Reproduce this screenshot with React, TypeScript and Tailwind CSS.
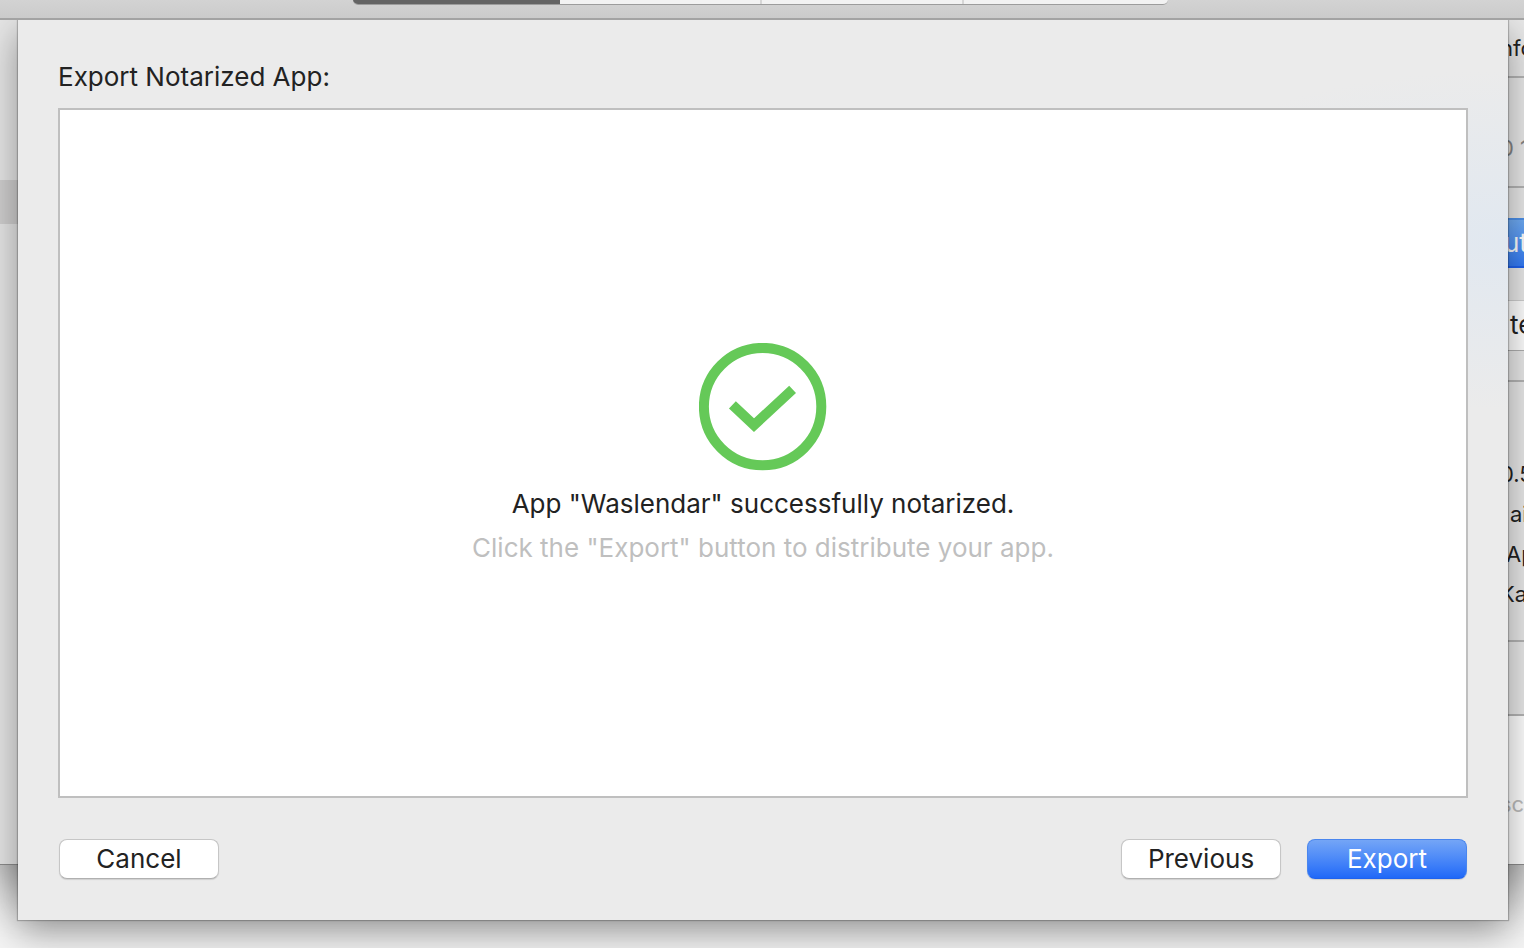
import type { ReactNode } from "react";

function Toolbar() {
  return (
    <header className="relative z-20 flex h-5 items-start justify-center border-b-2 border-[#a3a3a3] bg-linear-to-b from-[#d3d3d3] to-[#cbcbcb] pr-1">
      <div className="flex h-[5px] overflow-hidden rounded-b-lg border-b border-[#9c9c9c] bg-[#f2f2f2]">
        <div className="w-[207px] bg-[#646464]" />
        <div className="w-[202px] border-r-2 border-[#d6d6d6]" />
        <div className="w-[202px] border-r-2 border-[#d6d6d6]" />
        <div className="w-[204px]" />
      </div>
    </header>
  );
}

function Line({ children, className }: { children: ReactNode; className: string }) {
  return <div className={`h-10 text-[22px] leading-10 ${className}`}>{children}</div>;
}

function Inspector() {
  return (
    <aside className="flex w-6 flex-col overflow-hidden whitespace-nowrap bg-[#e9e9e9] text-[#222222]">
      <div className="h-[58px] border-b-2 border-[#b5b5b5] pt-2">
        <Line className="pl-0">nfo</Line>
      </div>
      <div className="h-[110px] border-b-2 border-[#b5b5b5] pt-[50px]">
        <Line className="text-[#858585]">0 1</Line>
      </div>
      <div className="flex h-[194px] flex-col gap-8 border-b-2 border-[#b5b5b5] pt-[30px]">
        <div className="h-[50px] border-y-2 border-t-[#4c90ea] border-b-[#1f62ee] bg-linear-to-b from-[#6fabf4] to-[#347bf6] pl-1 text-[26px] leading-[46px] text-white">
          ut
        </div>
        <div className="h-[51px] border-y border-t-[#d0d0d0] border-b-[#b0b0b0] bg-white pl-2.5 text-[26px] leading-[48px]">
          te
        </div>
      </div>
      <div className="h-[260px] border-b-2 border-[#b5b5b5] pt-[72px]">
        <Line className="pl-0">0.5</Line>
        <Line className="pl-2.5">ai</Line>
        <Line className="pl-1.5">Ap</Line>
        <Line className="pl-0">Ka</Line>
      </div>
      <div className="h-[74px] border-b-2 border-[#b5b5b5]" />
      <div className="flex-1 bg-white pt-[68px]">
        <Line className="text-[#bdbdbd]">sc</Line>
      </div>
    </aside>
  );
}

function BackgroundWindow() {
  return (
    <div className="col-start-1 row-start-1 mb-[83px] flex justify-between border-b border-[#8c8c8c] bg-[#e6e6e6] shadow-[0_20px_50px_rgba(0,0,0,0.5)]">
      <div className="w-6 pt-40">
        <div className="h-11 bg-[#d0cfcf]" />
      </div>
      <Inspector />
    </div>
  );
}

function SuccessIcon() {
  return (
    <svg width="128" height="128" viewBox="0 0 128 128" fill="none" stroke="#65c958" strokeWidth="10" aria-hidden="true">
      <circle cx="63.6" cy="63.6" r="58.7" />
      <path d="M33.4 61.8 55 82.2 93.6 46.4" />
    </svg>
  );
}

const plainButton =
  "h-10 w-40 rounded-lg border border-[#c6c6c6] border-b-[#b0b0b0] bg-white text-[26px] leading-9 text-[#222222] shadow-[0_1px_1px_rgba(0,0,0,0.12)]";

function ExportSheet() {
  return (
    <section
      role="dialog"
      aria-labelledby="sheet-title"
      className="relative z-10 col-start-1 row-start-1 mr-4 mb-7 ml-[18px] flex flex-col bg-[#ebebeb] bg-[radial-gradient(ellipse_400px_170px_at_100%_220px,#e1e8f0,#ebebeb00)] px-10 pt-[41px] pb-[41px] shadow-[0_0_1px_1px_rgba(0,0,0,0.22),0_12px_36px_rgba(0,0,0,0.38)]"
    >
      <h1 id="sheet-title" className="mb-[15px] text-[26px] leading-8">
        Export Notarized App:
      </h1>
      <div className="flex flex-1 flex-col items-center justify-center border-2 border-[#bfbfbf] bg-white pt-[7px] text-[26px]">
        <SuccessIcon />
        <p className="mt-[11px] leading-[44px]">App "Waslendar" successfully notarized.</p>
        <p className="leading-[44px] text-[#bfbfbf]">Click the "Export" button to distribute your app.</p>
      </div>
      <div className="mt-[41px] flex gap-[26px] px-px">
        <button type="button" className={plainButton}>
          Cancel
        </button>
        <button type="button" className={`ml-auto ${plainButton}`}>
          Previous
        </button>
        <button
          type="button"
          className="h-10 w-40 rounded-lg border border-[#4a86ee] border-b-[#1f62ee] bg-linear-to-b from-[#74a5f6] to-[#1f68f8] text-[26px] leading-9 text-white shadow-[0_1px_1px_rgba(0,0,0,0.12)]"
        >
          Export
        </button>
      </div>
    </section>
  );
}

export default function App() {
  return (
    <main className="flex min-h-screen flex-col overflow-hidden bg-[#f6f6f6] font-['Inter',sans-serif] text-[#222222]">
      <Toolbar />
      <div className="grid flex-1 grid-cols-1">
        <BackgroundWindow />
        <ExportSheet />
      </div>
    </main>
  );
}
